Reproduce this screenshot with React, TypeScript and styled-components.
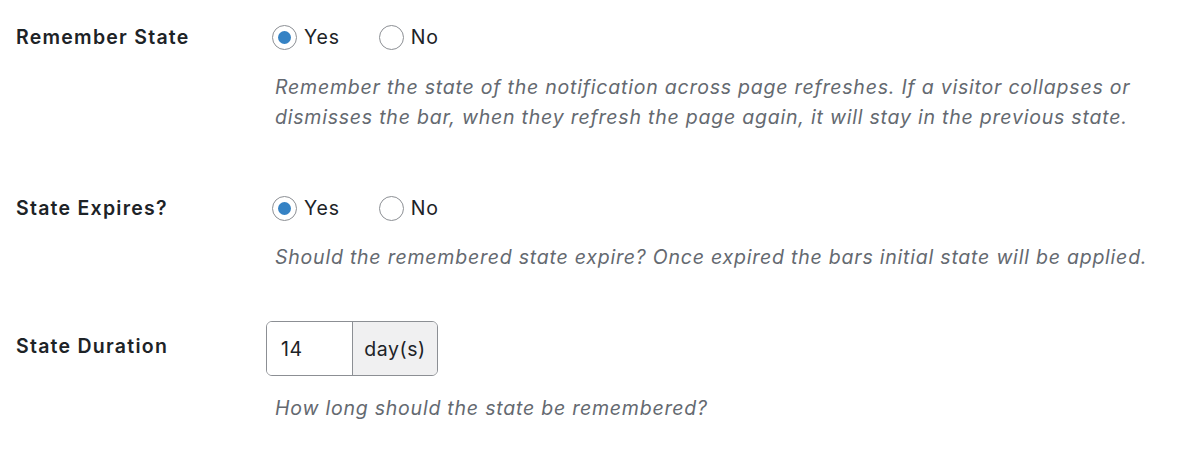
import React, { useState } from 'react';
import styled, { createGlobalStyle } from 'styled-components';

const GlobalStyle = createGlobalStyle`
    body {
        margin: 0;
        background: #ffffff;
        font-family: Inter, "Noto Sans", "Liberation Sans", sans-serif;
        color: #1d2327;
    }
`;

const FormTable = styled.div`
    display: flex;
    flex-direction: column;
    padding-left: 16px;
    width: 1184px;
`;

const Row = styled.div<{ $top: number }>`
    display: grid;
    grid-template-columns: 250px 1fr;
    align-items: start;
    padding-top: ${p => p.$top}px;
`;

const Label = styled.div<{ $offset?: number }>`
    font-size: 19.5px;
    font-weight: 600;
    letter-spacing: 1.25px;
    line-height: 30px;
    margin-top: ${p => p.$offset || 0}px;
    color: #1d2327;
`;

const Field = styled.div`
    display: flex;
    flex-direction: column;
`;

const RadioGroup = styled.div`
    display: flex;
    align-items: center;
    height: 30px;
    padding-left: 6px;
    gap: 39px;
`;

const RadioLabel = styled.label`
    display: flex;
    align-items: center;
    gap: 7px;
    font-size: 19.5px;
    letter-spacing: 0.8px;
    color: #1d2327;
    cursor: pointer;
`;

const RadioCircle = styled.span<{ $checked: boolean }>`
    width: 25px;
    height: 25px;
    box-sizing: border-box;
    border-radius: 50%;
    border: 1.5px solid #8c8f94;
    display: flex;
    align-items: center;
    justify-content: center;

    &::after {
        content: '';
        width: 13px;
        height: 13px;
        border-radius: 50%;
        background: #3582c4;
        display: ${p => (p.$checked ? 'block' : 'none')};
    }
`;

const Description = styled.p<{ $top: number }>`
    margin: ${p => p.$top}px 0 0 9px;
    font-size: 19.5px;
    font-style: italic;
    letter-spacing: 0.78px;
    line-height: 30px;
    color: #646970;
`;

const InputGroup = styled.div`
    display: flex;
    width: 172px;
    height: 55px;
    box-sizing: border-box;
    border: 1.5px solid #8c8f94;
    border-radius: 6px;
    overflow: hidden;
`;

const NumberInput = styled.input`
    width: 86px;
    box-sizing: border-box;
    border: none;
    border-right: 1.5px solid #8c8f94;
    padding: 0 0 0 14px;
    font-family: inherit;
    font-size: 19.5px;
    letter-spacing: 0.6px;
    color: #1d2327;
    outline: none;
    background: #ffffff;
`;

const Addon = styled.span`
    flex: 1;
    display: flex;
    align-items: center;
    justify-content: center;
    background: #f0f0f1;
    font-size: 19.5px;
    letter-spacing: 0.6px;
    color: #1d2327;
`;

function Radios({ name }: { name: string }) {
    const [value, setValue] = useState('yes');
    const options = [
        { label: 'Yes', value: 'yes' },
        { label: 'No', value: 'no' }
    ];

    return (
        <RadioGroup>
            {options.map(item =>
                <RadioLabel key={item.value} onClick={() => setValue(item.value)} data-name={name}>
                    <RadioCircle $checked={value === item.value} />
                    {item.label}
                </RadioLabel>
            )}
        </RadioGroup>
    );
}

export default function App() {
    const [duration, setDuration] = useState('14');

    return (
        <>
            <GlobalStyle />
            <FormTable>
                <Row $top={22}>
                    <Label>Remember State</Label>
                    <Field>
                        <Radios name="remember_state" />
                        <Description $top={20}>
                            Remember the state of the notification across page refreshes. If a visitor collapses or
                            <br />
                            dismisses the bar, when they refresh the page again, it will stay in the previous state.
                        </Description>
                    </Field>
                </Row>

                <Row $top={61}>
                    <Label>State Expires?</Label>
                    <Field>
                        <Radios name="state_expires" />
                        <Description $top={19}>
                            Should the remembered state expire? Once expired the bars initial state will be applied.
                        </Description>
                    </Field>
                </Row>

                <Row $top={49}>
                    <Label $offset={10}>State Duration</Label>
                    <Field>
                        <InputGroup>
                            <NumberInput value={duration} onChange={e => setDuration(e.target.value)} />
                            <Addon>day(s)</Addon>
                        </InputGroup>
                        <Description $top={17}>How long should the state be remembered?</Description>
                    </Field>
                </Row>
            </FormTable>
        </>
    );
}
